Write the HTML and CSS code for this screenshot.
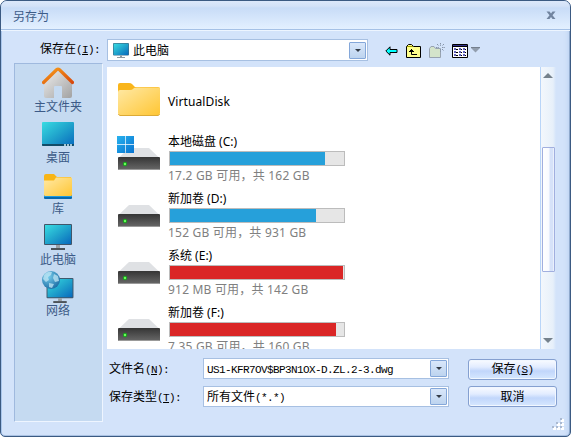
FILE: index.html
```html
<!DOCTYPE html>
<html lang="zh-CN">
  <head>
    <meta charset="UTF-8" />
    <meta name="viewport" content="width=device-width, initial-scale=1.0" />
    <title>另存为</title>
    <link rel="stylesheet" href="styles.css">
  </head>
  <body>
    <!-- shared icon shapes -->
    <svg class="defs" width="0" height="0">
      <defs>
        <linearGradient id="screen" x1="0" y1="0" x2="1" y2="1">
          <stop offset="0" stop-color="#38dce2" />
          <stop offset="0.5" stop-color="#20a4cc" />
          <stop offset="1" stop-color="#0869bd" />
        </linearGradient>
        <linearGradient id="paper" x1="0" y1="0" x2="1" y2="1">
          <stop offset="0" stop-color="#ffe9a6" />
          <stop offset="1" stop-color="#ffc634" />
        </linearGradient>
        <linearGradient id="metal" x1="0" y1="0" x2="0" y2="1">
          <stop offset="0" stop-color="#353535" />
          <stop offset="1" stop-color="#686868" />
        </linearGradient>
        <linearGradient id="wall" x1="0" y1="0" x2="1" y2="1">
          <stop offset="0" stop-color="#ededed" />
          <stop offset="1" stop-color="#a2a2a2" />
        </linearGradient>
        <linearGradient id="roof" x1="0" y1="0" x2="1" y2="1">
          <stop offset="0" stop-color="#f9a01b" />
          <stop offset="1" stop-color="#d8480c" />
        </linearGradient>
        <linearGradient id="win" x1="0" y1="0" x2="1" y2="1">
          <stop offset="0" stop-color="#28b2ee" />
          <stop offset="1" stop-color="#0873d0" />
        </linearGradient>
        <radialGradient id="globe" cx="0.35" cy="0.3" r="0.8">
          <stop offset="0" stop-color="#77cdec" />
          <stop offset="1" stop-color="#1767a0" />
        </radialGradient>
        <symbol id="drive" viewBox="0 0 44 24">
          <path d="M12 1H32L43 11.5H1Z" fill="#dfe1e4" />
          <rect x="1" y="10" width="42" height="13" rx="1" fill="url(#metal)" />
          <path d="M1.500 22.500H42.500" stroke="#9a9a9a" />
          <circle cx="8" cy="17" r="2.200" fill="#16a01c" />
          <circle cx="8" cy="17" r="1.200" fill="#6dfb5c" />
        </symbol>
        <symbol id="monitor" viewBox="0 0 28 26">
          <rect x="0" y="0" width="28" height="21" rx="1" fill="#40566a" />
          <rect x="1" y="1" width="26" height="19" fill="url(#screen)" />
          <rect x="12" y="21" width="4" height="3" fill="#9aa0a5" />
          <rect x="7" y="24" width="14" height="2" fill="#4c5359" />
        </symbol>
      </defs>
    </svg>

    <div class="dialog">
      <div class="titlebar">
        <span class="title">另存为</span>
        <svg class="close" width="10" height="9" viewBox="0 0 10 9">
          <path d="M0.500 0.500H3.500L5 2.500L6.500 0.500H9.500L6.500 4.200L9.500 8H6.500L5 6L3.500 8H0.500L3.500 4.200Z" fill="#71849f" />
        </svg>
      </div>

      <div class="toolbar">
        <label class="look-in">保存在<span class="mono">(<u>I</u>):</span></label>
        <div class="combo location">
          <svg class="combo-icon" width="16" height="15" viewBox="0 0 16 15">
            <rect width="16" height="12.500" rx="1" fill="#3c708b" />
            <rect x="0.700" y="0.700" width="14.600" height="11.300" fill="url(#screen)" />
            <path d="M7 12.500h2v1.500h3v1H4v-1h3z" fill="#8f999f" />
          </svg>
          <span class="value">此电脑</span>
          <button class="arrow"></button>
        </div>
        <div class="tools">
          <svg width="13" height="10" viewBox="0 0 13 10">
            <path d="M0.800 5L5 0.800V3.500H12V6.500H5V9.200Z" fill="#0ff" stroke="#000" />
          </svg>
          <svg class="tool-up" width="15" height="14" viewBox="0 0 15 14">
            <path d="M0.500 13.500V2.500L2.500 0.500H5.500L7.500 2.500H14.500V13.500Z" fill="#ffff8c" stroke="#000" />
            <path d="M1 2.500H7" stroke="#a0a000" />
            <path d="M5.500 5V10.500H11M3 7.500H8M4 6.500H7" fill="none" stroke="#000" />
          </svg>
          <svg class="tool-new" width="17" height="15" viewBox="0 0 17 15">
            <path d="M0.500 14.500V5.500L2 3.500H5L6.500 5.500H11.500V14.500Z" fill="#d4e4cb" stroke="#98a3b0" />
            <path d="M11.500 0V3M11.500 6V9M7 4.500H10M13 4.500H16M8 1L10 3M15 1L13 3M13 6L15 8" stroke="#8694a8" stroke-dasharray="1.500 0.700" />
          </svg>
          <svg class="tool-view" width="16" height="14" viewBox="0 0 16 14">
            <path d="M0.500 0.500H15.500V13.500H0.500Z" fill="#fff" stroke="#000" />
            <path d="M1 1.500H15" stroke="#31318c" />
            <path d="M0 2.500H16" stroke="#000" />
            <path d="M2 5H4M7 5H9M11 5H13M2 8H4M7 8H9M11 8H13M2 11H4M7 11H9M11 11H13" stroke="#2c2ca4" stroke-width="1.600" />
            <path d="M4 5.500H6M9 5.500H10M13 5.500H14M4 8.500H6M9 8.500H10M13 8.500H14M4 11.500H6M9 11.500H10M13 11.500H14" stroke="#000" />
          </svg>
          <svg class="tool-more" width="9" height="6" viewBox="0 0 9 6">
            <path d="M0 0.500H9" stroke="#75808e" />
            <path d="M0 1H9L4.500 5.500Z" fill="#929eae" />
          </svg>
        </div>
      </div>

      <div class="content">
        <div class="places">
          <div class="place">
            <svg width="32" height="32" viewBox="0 0 32 32">
              <path d="M2 16L16 4L30 16V29Q30 31 28 31H20V20Q20 19 19 19H13Q12 19 12 20V31H4Q2 31 2 29Z" fill="url(#wall)" />
              <path d="M1.500 15.500L14.500 2.800Q16 1.500 17.500 2.800L30.500 15.500" fill="none" stroke="url(#roof)" stroke-width="3.200" stroke-linecap="round" />
            </svg>
            <span>主文件夹</span>
          </div>
          <div class="place">
            <svg width="32" height="32" viewBox="0 0 32 32">
              <rect y="4" width="32" height="24" rx="1" fill="url(#screen)" />
              <path d="M0 26H32V27Q32 28 31 28H1Q0 28 0 27Z" fill="#124c68" />
              <path d="M22 27H24M25 27H27M28 27H30" stroke="#d5eef7" stroke-width="1.500" />
            </svg>
            <span>桌面</span>
          </div>
          <div class="place">
            <svg width="32" height="32" viewBox="0 0 32 32">
              <path d="M2 25H30V29Q30 30 29 30H3Q2 30 2 29Z" fill="#0869ae" />
              <path d="M2 27.500H30" stroke="#219cdf" />
              <path d="M2 10V7Q2 5 4 5H12L15 8H29V12H2Z" fill="#f8b516" />
              <path d="M2 11.500H12L14 8.500H29Q30 8.500 30 9.500V26Q30 27 29 27H3Q2 27 2 26Z" fill="url(#paper)" />
            </svg>
            <span>库</span>
          </div>
          <div class="place">
            <svg width="32" height="32" viewBox="0 0 32 32">
              <use href="#monitor" x="2" y="4" width="28" height="26" />
            </svg>
            <span>此电脑</span>
          </div>
          <div class="place">
            <svg width="32" height="32" viewBox="0 0 32 32">
              <use href="#monitor" x="4" y="7" width="28" height="25" />
              <circle cx="9" cy="9" r="9" fill="url(#globe)" />
              <path d="M2 4Q5 0 10 1L9 4L6 6L7 9L4 11L1 8ZM12 3L16 5L17 10L13 11L11 7ZM7 12L12 13L10 17L7 16Z" fill="#c2e7f4" opacity="0.750" />
            </svg>
            <span>网络</span>
          </div>
        </div>

        <div class="browser">
          <div class="files">
            <div class="file folder">
              <svg width="44" height="36" viewBox="0 0 44 36">
                <path d="M1 10V3Q1 1 3 1H12Q14 1 15 2L18 5H41Q43 5 43 7V12H1Z" fill="#f9b51b" />
                <path d="M1 10Q1 8 3 8H13Q15 8 16 7L17 6Q18 5.500 20 5.500H42Q43 5.500 43 7V31Q43 33 41 33H3Q1 33 1 31Z" fill="url(#paper)" />
                <path d="M1.500 32Q2 33.500 3 33.500H41Q42 33.500 42.500 32" fill="none" stroke="#dcaa36" />
              </svg>
              <div class="name">VirtualDisk</div>
            </div>
            <div class="file">
              <svg width="44" height="35" viewBox="0 0 44 35">
                <use href="#drive" y="11" width="44" height="24" />
                <path d="M0 0H8.300V8.300H0ZM9 0H17V8.300H9ZM0 9H8.300V17H0ZM9 9H17V17H9Z" fill="url(#win)" />
              </svg>
              <div class="info">
                <div class="name">本地磁盘 (C:)</div>
                <div class="meter"><div class="used" style="width: 155px"></div></div>
                <div class="free">17.2 GB 可用，共 162 GB</div>
              </div>
            </div>
            <div class="file">
              <svg width="44" height="35" viewBox="0 0 44 35"><use href="#drive" y="11" width="44" height="24" /></svg>
              <div class="info">
                <div class="name">新加卷 (D:)</div>
                <div class="meter"><div class="used" style="width: 146px"></div></div>
                <div class="free">152 GB 可用，共 931 GB</div>
              </div>
            </div>
            <div class="file">
              <svg width="44" height="35" viewBox="0 0 44 35"><use href="#drive" y="11" width="44" height="24" /></svg>
              <div class="info">
                <div class="name">系统 (E:)</div>
                <div class="meter"><div class="used full" style="width: 173px"></div></div>
                <div class="free">912 MB 可用，共 142 GB</div>
              </div>
            </div>
            <div class="file">
              <svg width="44" height="35" viewBox="0 0 44 35"><use href="#drive" y="11" width="44" height="24" /></svg>
              <div class="info">
                <div class="name">新加卷 (F:)</div>
                <div class="meter"><div class="used full" style="width: 166px"></div></div>
                <div class="free">7.35 GB 可用，共 160 GB</div>
              </div>
            </div>
          </div>
          <div class="scrollbar">
            <div class="scroll-arrow up"></div>
            <div class="thumb"></div>
            <div class="scroll-arrow down"></div>
          </div>
        </div>

        <div class="form">
          <label>文件名<span class="mono">(<u>N</u>):</span></label>
          <div class="combo">
            <span class="value mono">US1-KFR7OV$BP3N1OX-D.ZL.2-3.dwg</span>
            <button class="arrow"></button>
          </div>
          <button class="btn">保存<span class="mono">(<u>S</u>)</span></button>
          <label>保存类型<span class="mono">(<u>T</u>):</span></label>
          <div class="combo">
            <span class="value">所有文件<span class="mono">(*.*)</span></span>
            <button class="arrow"></button>
          </div>
          <button class="btn">取消</button>
        </div>
      </div>

      <svg class="grip" width="12" height="12" viewBox="0 0 12 12">
        <path d="M9 1h3v3h-3zM5 5h3v3h-3zM9 5h3v3h-3zM1 9h3v3h-3zM5 9h3v3h-3zM9 9h3v3h-3z" fill="#fff" />
        <path d="M8 0h2v2h-2zM4 4h2v2h-2zM8 4h2v2h-2zM0 8h2v2h-2zM4 8h2v2h-2zM8 8h2v2h-2z" fill="#aab9d0" />
      </svg>
    </div>
  </body>
</html>
```
FILE: styles.css
```css
* {
  box-sizing: border-box;
}

body {
  margin: 0;
  background: #fff;
  font-family: "Liberation Sans", "Noto Sans CJK SC", sans-serif;
  font-size: 12px;
  line-height: 16px;
  color: #000;
}

svg {
  display: block;
  flex: none;
}

.defs {
  position: absolute;
}

.dialog {
  position: relative;
  width: 571px;
  height: 437px;
  overflow: hidden;
  background: #d3e3fa;
  border: 1px solid #3b5a82;
  border-radius: 7px 7px 5px 5px;
  box-shadow: inset 1px 0 #a9c6ec, inset -1px 0 #8fa9cc, inset 0 -1px #a9c1e2, inset -5px 0 5px -3px #bdd3f2;
}

.titlebar {
  display: flex;
  justify-content: space-between;
  align-items: center;
  height: 30px;
  padding: 0 14px 1px 12px;
  background: linear-gradient(#dce8fa 0, #d3e2f8 5px, #c8dcf7 7px, #e3f0ff 28px, #a5c1e6 28px, #a5c1e6 29px, #edf5ff 29px);
}

.title {
  padding-top: 2px;
  color: #3d5c88;
}

.mono {
  font-family: "Liberation Mono", monospace;
  font-size: 11px;
  letter-spacing: -0.6px;
}

.toolbar {
  display: flex;
  height: 36px;
  padding: 8px 0 0 39px;
}

.look-in {
  width: 67px;
  padding-top: 2px;
}

.combo {
  display: flex;
  align-items: center;
  height: 21px;
  padding: 0 1px 0 3px;
  background: #fff;
  border: 1px solid #a7c0e2;
}

.location {
  width: 261px;
  height: 22px;
  padding-left: 5px;
}

.combo-icon {
  margin-right: 4px;
}

.value {
  padding-top: 2px;
}

.arrow {
  display: flex;
  justify-content: center;
  align-items: center;
  width: 17px;
  height: 17px;
  margin-left: auto;
  padding: 0;
  background: linear-gradient(#d9e7fa, #bdd4ef);
  border: 1px solid #84a7d9;
  border-radius: 1px;
}

.arrow::before {
  content: "";
  border: solid transparent;
  border-width: 3px 3px 0;
  border-top-color: #333b46;
}

.tools {
  display: flex;
  align-items: center;
  height: 24px;
  margin-left: 17px;
}

.tool-up {
  margin-left: 8px;
}

.tool-new {
  margin: -2px 0 0 8px;
}

.tool-view {
  margin-left: 6px;
}

.tool-more {
  margin: -3px 0 0 3px;
}

.content {
  display: grid;
  grid-template-columns: 89px 450px;
  grid-template-rows: 282px 73px;
  column-gap: 4px;
  padding-left: 13px;
}

.places {
  grid-row: span 2;
  margin-top: -4px;
  padding-top: 4px;
  background: #c5daf1;
  border: 1px solid #9fb9de;
  border-right-color: #eef5ff;
  border-bottom-color: #eef5ff;
}

.place {
  display: flex;
  flex-direction: column;
  align-items: center;
  height: 51px;
  margin-top: -1px;
  margin-bottom: 1px;
  padding-right: 1px;
  color: #3c5a87;
}

.browser {
  display: flex;
  overflow: hidden;
  background: #fff;
}

.files {
  flex: 1;
  padding: 6px 0 0 10px;
  font-family: "Noto Sans", "Noto Sans CJK SC", sans-serif;
}

.file {
  display: flex;
  height: 57px;
  padding-top: 4px;
}

.file svg {
  margin: 2px 7px 0 0;
}

.folder {
  align-items: flex-start;
}

.folder svg {
  margin-top: 5px;
}

.folder .name {
  margin-top: 17px;
  letter-spacing: 0.1px;
}

.name {
  height: 17px;
}

.meter {
  width: 176px;
  height: 15px;
  margin-left: 1px;
  background: #e6e6e6;
  border: 1px solid #bcbcbc;
}

.used {
  height: 13px;
  background: #26a0da;
}

.full {
  background: #da2626;
}

.free {
  margin-top: 2px;
  letter-spacing: 0.2px;
  color: #808080;
}

.scrollbar {
  display: flex;
  flex-direction: column;
  align-items: center;
  width: 17px;
  padding: 6px 2px 6px 0;
  background: linear-gradient(90deg, #f3f7fc, #e7f0fa 12px, #d3e3fa 15px);
  border-left: 1px solid #b9d5f8;
}

.scroll-arrow {
  border: solid transparent;
}

.up {
  border-width: 0 5px 5px;
  border-bottom-color: #75818c;
}

.down {
  margin-top: auto;
  border-width: 5px 5px 0;
  border-top-color: #75818c;
}

.thumb {
  width: 13px;
  height: 125px;
  margin-top: 69px;
  background: linear-gradient(90deg, #fff, #f8faff 6px, #d6e2f9 7px, #d6e2f9 10px, #fff 11px);
  border: 1px solid #a1afdf;
  border-radius: 1px;
}

.form {
  display: grid;
  grid-template-columns: 94px 246px 89px;
  grid-template-rows: 22px 21px;
  row-gap: 6px;
  padding: 9px 0 0 2px;
}

.form label {
  padding-top: 3px;
}

.btn {
  align-self: end;
  width: 89px;
  height: 21px;
  margin-left: 19px;
  padding: 0;
  font: inherit;
  color: #000;
  background: linear-gradient(#f9fbff, #e2ecff 7px, #c1d6fb 11px, #d9eaff 20px);
  border: 1px solid #85a0d0;
  border-radius: 3px;
  box-shadow: inset 0 0 0 1px #f1f7ff;
}

.grip {
  position: absolute;
  right: 6px;
  bottom: 6px;
}
```
